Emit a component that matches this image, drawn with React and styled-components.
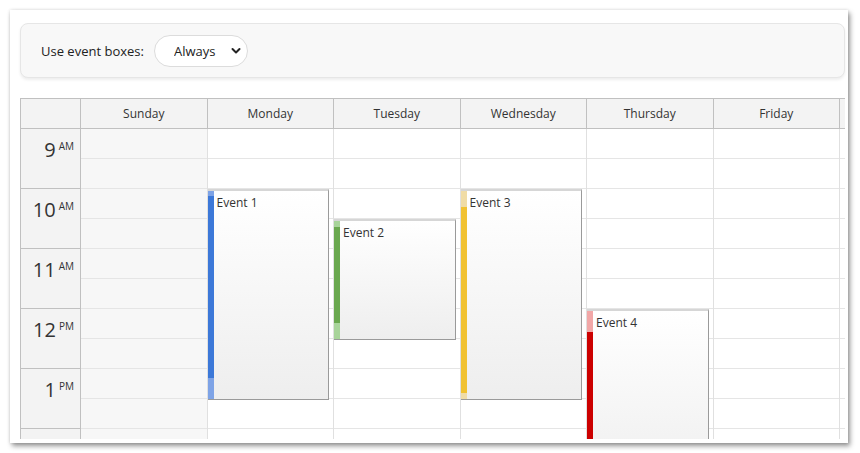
import React from "react";
import styled, { createGlobalStyle } from "styled-components";

const GlobalStyle = createGlobalStyle`
  html, body {
    margin: 0;
    padding: 0;
    background: #ffffff;
  }
  body {
    font-family: "Open Sans", "Noto Sans", "Liberation Sans", sans-serif;
    color: #333;
  }
`;

const Page = styled.div`
  padding: 10px;
  width: 860px;
  height: 453px;
  box-sizing: border-box;
`;

const Panel = styled.div`
  width: 838px;
  height: 433px;
  box-sizing: border-box;
  padding: 13px 3px 5px 10px;
  background: #fff;
  box-shadow: 2px 3px 5px rgba(0, 0, 0, 0.42), 0 0 3px rgba(0, 0, 0, 0.12);
  display: flex;
  flex-direction: column;
  gap: 20px;
  overflow: hidden;
`;

const Toolbar = styled.div`
  height: 55px;
  box-sizing: border-box;
  flex-shrink: 0;
  display: flex;
  align-items: center;
  gap: 10px;
  padding-left: 20px;
  background: #f8f8f8;
  border: 1px solid #e6e6e6;
  border-radius: 8px;
  box-shadow: 0 2px 3px rgba(0, 0, 0, 0.07);
  font-size: 13px;
  color: #222;
`;

const SelectWrap = styled.div`
  position: relative;
  display: inline-flex;
`;

const Select = styled.select`
  appearance: none;
  width: 94px;
  height: 32px;
  box-sizing: border-box;
  padding: 0 0 0 19px;
  border: 1px solid #dcdcdc;
  border-radius: 16px;
  background: #fff;
  font-family: inherit;
  font-size: 13px;
  color: #222;
  outline: none;
`;

const Chevron = styled.svg`
  position: absolute;
  right: 7px;
  top: 12px;
  pointer-events: none;
`;

const Viewport = styled.div`
  height: 340px;
  flex-shrink: 0;
  overflow: hidden;
  border-left: 1px solid #c0c0c0;
  border-top: 1px solid #c0c0c0;
`;

const Grid = styled.div`
  display: grid;
  grid-template-columns: 60px repeat(7, 126.5px);
  grid-template-rows: 30px auto;
  width: max-content;
`;

const HeaderCell = styled.div`
  box-sizing: border-box;
  background: #f3f3f3;
  border-right: 1px solid #c0c0c0;
  border-bottom: 1px solid #c0c0c0;
  display: flex;
  align-items: center;
  justify-content: center;
  font-size: 12px;
  color: #333;
`;

const TimeColumn = styled.div`
  background: #f3f3f3;
  border-right: 1px solid #c0c0c0;
  box-sizing: border-box;
`;

const HourCell = styled.div`
  height: 60px;
  box-sizing: border-box;
  border-bottom: 1px solid #c0c0c0;
  display: flex;
  justify-content: flex-end;
  align-items: flex-start;
  padding: 8px 6px 0 0;
  color: #333;
`;

const HourNum = styled.span`
  font-size: 20px;
  line-height: 26px;
`;

const HourSuffix = styled.span`
  font-size: 10px;
  line-height: 14px;
  margin-left: 3px;
  margin-top: 2px;
`;

const DayColumn = styled.div`
  position: relative;
  box-sizing: border-box;
  border-right: 1px solid #e0e0e0;
  background: ${(p) => (p.$off ? "#f7f7f7" : "#ffffff")};
`;

const Slot = styled.div`
  height: 30px;
  box-sizing: border-box;
  border-bottom: 1px solid #e5e5e5;
`;

const EventBox = styled.div`
  position: absolute;
  left: 0;
  right: 4px;
  box-sizing: border-box;
  display: flex;
  background: linear-gradient(to bottom, #ffffff, #eeeeee);
  border-top: 2px solid #d6d6d6;
  border-right: 1px solid #9a9a9a;
  border-bottom: 1px solid #9a9a9a;
  font-size: 12px;
  color: #333;
  overflow: hidden;
`;

const DurationBar = styled.div`
  width: 6px;
  flex-shrink: 0;
  margin-top: -2px;
  display: flex;
  flex-direction: column;
  background: ${(p) => p.$light};
`;

const DurationFill = styled.div`
  background: ${(p) => p.$dark};
`;

const EventText = styled.div`
  padding: 3px 0 0 3px;
  white-space: nowrap;
`;

// the seventh column only peeks in at the right edge, so its header stays empty
const days = ["Sunday", "Monday", "Tuesday", "Wednesday", "Thursday", "Friday", ""];

// rows after 1 PM fall below the visible area and carry no label
const hours = [
  ["9", "AM"],
  ["10", "AM"],
  ["11", "AM"],
  ["12", "PM"],
  ["1", "PM"],
  ["", ""],
];

// top/height of the box in px from 9 AM, fill offsets for the real duration
const events = [
  { day: 1, text: "Event 1", top: 60, height: 211, fillTop: 7, fillBottom: 22, dark: "#3c78d8", light: "#7ea3e6" },
  { day: 2, text: "Event 2", top: 90, height: 121, fillTop: 8, fillBottom: 17, dark: "#6aa84f", light: "#a8d49a" },
  { day: 3, text: "Event 3", top: 60, height: 211, fillTop: 18, fillBottom: 7, dark: "#f1c232", light: "#f0dca6" },
  { day: 4, text: "Event 4", top: 180, height: 180, fillTop: 23, fillBottom: 0, dark: "#cc0000", light: "#f2a7a7" },
];

const CalendarEvent = ({ ev }) => (
  <EventBox style={{ top: ev.top, height: ev.height }}>
    <DurationBar $light={ev.light}>
      <DurationFill
        $dark={ev.dark}
        style={{ marginTop: ev.fillTop, height: ev.height - ev.fillTop - ev.fillBottom }}
      />
    </DurationBar>
    <EventText>{ev.text}</EventText>
  </EventBox>
);

export default function App() {
  return (
    <Page>
      <GlobalStyle />
      <Panel>
        <Toolbar>
          <span>Use event boxes:</span>
          <SelectWrap>
            <Select defaultValue="Always">
              <option>Always</option>
              <option>Short</option>
              <option>Never</option>
            </Select>
            <Chevron width="10" height="8" viewBox="0 0 10 8">
              <path d="M1.5 2 L5 5.5 L8.5 2" fill="none" stroke="#222" strokeWidth="2" strokeLinecap="round" strokeLinejoin="round" />
            </Chevron>
          </SelectWrap>
        </Toolbar>
        <Viewport>
          <Grid>
            <HeaderCell />
            {days.map((d, i) => (
              <HeaderCell key={i}>{d}</HeaderCell>
            ))}
            <TimeColumn>
              {hours.map(([h, s], i) => (
                <HourCell key={i}>
                  <HourNum>{h}</HourNum>
                  <HourSuffix>{s}</HourSuffix>
                </HourCell>
              ))}
            </TimeColumn>
            {days.map((d, i) => (
              <DayColumn key={i} $off={i === 0}>
                {hours.map((_, j) => (
                  <React.Fragment key={j}>
                    <Slot />
                    <Slot />
                  </React.Fragment>
                ))}
                {events
                  .filter((ev) => ev.day === i)
                  .map((ev) => (
                    <CalendarEvent key={ev.text} ev={ev} />
                  ))}
              </DayColumn>
            ))}
          </Grid>
        </Viewport>
      </Panel>
    </Page>
  );
}
